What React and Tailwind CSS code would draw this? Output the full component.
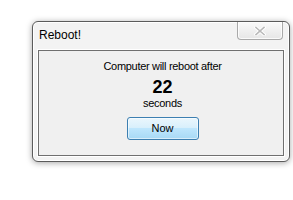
import React from 'react';

const CloseGlyph = () => (
    <svg width="12" height="10" viewBox="0 0 12 10">
        <path d="M2 1.5 L10 8.5 M10 1.5 L2 8.5" stroke="#ffffff" strokeWidth="3.4" strokeLinecap="square" />
        <path d="M2 1.5 L10 8.5 M10 1.5 L2 8.5" stroke="#b9b9b9" strokeWidth="1.6" strokeLinecap="square" />
    </svg>
);

const RebootDialog = ({ seconds }) => (
    <div className="w-[258px] h-[141px] rounded-[6px] border border-[#5b5b5b] bg-[#f3f3f3] shadow-[0_1px_6px_rgba(0,0,0,0.35),inset_0_0_0_1px_#ffffff] flex flex-col">
        <div className="h-[28px] flex justify-between items-start pl-[6px] pr-[6px]">
            <span className="mt-[6px] text-[12px] leading-[14px] text-black">Reboot!</span>
            <button className="w-[46px] h-[18px] rounded-b-[4px] border border-t-0 border-[#a9a9a9] bg-linear-to-b from-[#fafafa] to-[#e6e6e6] shadow-[inset_0_0_0_1px_rgba(255,255,255,0.8)] flex items-center justify-center">
                <CloseGlyph />
            </button>
        </div>
        <div className="flex-1 mx-[5px] mb-[5px] border border-[#6f6f6f] bg-[#f0f0f0] shadow-[0_0_0_1px_#ffffff] flex flex-col items-center pt-[9px] pl-[3px]">
            <p className="text-[11px] leading-[13px] tracking-[-0.3px] text-black">Computer will reboot after</p>
            <p className="mt-[4px] text-[18px] leading-[20px] font-bold text-black">{seconds}</p>
            <p className="text-[11px] leading-[13px] tracking-[-0.3px] text-black">seconds</p>
            <button className="mt-[7px] w-[72px] h-[23px] rounded-[3px] border border-[#3c7fb1] bg-[linear-gradient(to_bottom,#eaf6fd_0%,#d9f0fc_45%,#bee6fd_50%,#a7d9f5_100%)] shadow-[inset_0_0_0_1px_rgba(255,255,255,0.55)] text-[11px] leading-[13px] text-black">
                Now
            </button>
        </div>
    </div>
);

export default function App() {
    return (
        <div className="w-[293px] h-[200px] bg-white pt-[21px] pl-[32px] font-['Liberation_Sans',Arial,sans-serif]">
            <RebootDialog seconds={22} />
        </div>
    );
}
